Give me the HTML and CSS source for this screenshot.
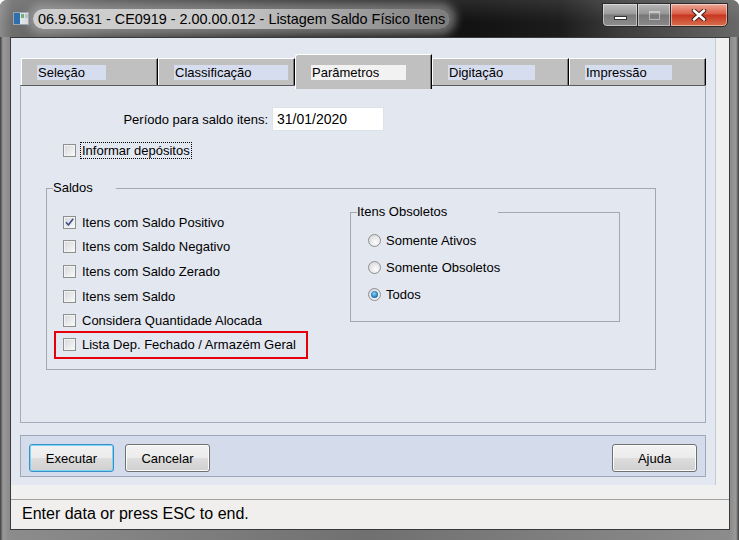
FILE: index.html
```html
<!DOCTYPE html>
<html lang="pt-BR">
<head>
    <meta charset="UTF-8">
    <meta name="viewport" content="width=device-width, initial-scale=1.0">
    <title>Listagem Saldo Físico Itens</title>
    <link rel="stylesheet" href="styles.css">
</head>
<body>
    <div class="window">
        <div class="titlebar">
            <svg class="app-icon" width="16" height="13" viewBox="0 0 16 13">
                <rect x="0.5" y="0.5" width="15" height="12" fill="#e4e9ef" stroke="#9aa6b4"/>
                <rect x="1" y="1" width="6" height="11" fill="#2f6fae"/>
                <rect x="8" y="2" width="3" height="4" fill="#6fae6a"/>
                <rect x="12" y="2" width="3" height="4" fill="#b9c6d3"/>
            </svg>
            <span class="title">06.9.5631 - CE0919 - 2.00.00.012 - Listagem Saldo Físico Itens</span>
            <div class="win-buttons">
                <div class="wb wb-min"><span class="ico-min"></span></div>
                <div class="wb wb-max"><span class="ico-max"></span></div>
                <div class="wb wb-close">
                    <svg width="16" height="12" viewBox="0 0 16 12">
                        <path d="M3 1.5 L13 10.5 M13 1.5 L3 10.5" stroke="#3a1a14" stroke-width="4.4" stroke-linecap="round"/>
                        <path d="M3 1.5 L13 10.5 M13 1.5 L3 10.5" stroke="#fff" stroke-width="2.6" stroke-linecap="round"/>
                    </svg>
                </div>
            </div>
        </div>

        <div class="client">
            <div class="upper">
                <div class="main">
                    <div class="tabs">
                        <div class="tab"><span class="tab-label w-sel">Seleção</span></div>
                        <div class="tab"><span class="tab-label w-cla">Classificação</span></div>
                        <div class="tab tab-active"><span class="tab-label w-par">Parâmetros</span></div>
                        <div class="tab"><span class="tab-label w-dig">Digitação</span></div>
                        <div class="tab"><span class="tab-label w-imp">Impressão</span></div>
                    </div>

                    <div class="panel">
                        <div class="period">
                            <span class="period-label">Período para saldo itens:</span>
                            <div class="field">31/01/2020</div>
                        </div>

                        <div class="opt informar">
                            <span class="box"></span>
                            <span class="focus">Informar depósitos</span>
                        </div>

                        <fieldset class="group saldos">
                            <legend class="lg-saldos">Saldos</legend>
                            <div class="saldos-body">
                                <div class="checks">
                                    <div class="opt">
                                        <span class="box">
                                            <svg width="11" height="11" viewBox="0 0 11 11"><path d="M2 5.2 L4.4 8 L9.2 1.8" fill="none" stroke="#3f528c" stroke-width="1.7"/></svg>
                                        </span>
                                        <span class="txt">Itens com Saldo Positivo</span>
                                    </div>
                                    <div class="opt"><span class="box"></span><span class="txt">Itens com Saldo Negativo</span></div>
                                    <div class="opt"><span class="box"></span><span class="txt">Itens com Saldo Zerado</span></div>
                                    <div class="opt"><span class="box"></span><span class="txt">Itens sem Saldo</span></div>
                                    <div class="opt"><span class="box"></span><span class="txt">Considera Quantidade Alocada</span></div>
                                    <div class="opt marked"><span class="box"></span><span class="txt">Lista Dep. Fechado / Armazém Geral</span></div>
                                </div>

                                <fieldset class="group obsoletos">
                                    <legend class="lg-obs">Itens Obsoletos</legend>
                                    <div class="radios">
                                        <div class="ropt"><span class="radio"></span><span class="txt">Somente Ativos</span></div>
                                        <div class="ropt"><span class="radio"></span><span class="txt">Somente Obsoletos</span></div>
                                        <div class="ropt"><span class="radio radio-on"></span><span class="txt">Todos</span></div>
                                    </div>
                                </fieldset>
                            </div>
                        </fieldset>
                    </div>

                    <div class="actions">
                        <button class="btn btn-focus">Executar</button>
                        <button class="btn">Cancelar</button>
                        <button class="btn btn-help">Ajuda</button>
                    </div>
                </div>
                <div class="strip"></div>
            </div>
            <div class="gap"></div>
            <div class="status">Enter data or press ESC to end.</div>
        </div>
    </div>
</body>
</html>
```

FILE: styles.css
```css
* {
    box-sizing: border-box;
}

body {
    margin: 0;
    background-color: #fff;
    font-family: "Liberation Sans", Arial, sans-serif;
    font-size: 13px;
    color: #000;
}

.window {
    width: 739px;
    height: 540px;
    padding-bottom: 10px;
    display: flex;
    flex-direction: column;
    border-radius: 7px 7px 0 0;
    overflow: hidden;
    background: linear-gradient(to right, #3c3c3c 0, #9a9a9a 3px, #8c8c8c 9px, #707070 50%, #8c8c8c 730px, #9a9a9a 736px, #3c3c3c 739px);
}

/* title bar */
.titlebar {
    height: 37px;
    display: flex;
    align-items: center;
    padding-left: 13px;
    background:
        linear-gradient(to bottom, rgba(255, 255, 255, 0.1), rgba(0, 0, 0, 0) 60%),
        linear-gradient(to right, #8c8c8c 0, #6e6e6e 12px, #4a4a4a 110px, #262626 300px, #121212 470px, #1c1c1c 560px, #3c3c3c 620px, #686868 739px);
}

.app-icon {
    flex: none;
}

.title {
    margin-left: 4px;
    padding: 0 5px;
    height: 20px;
    line-height: 20px;
    font-size: 14.4px;
    color: #000;
    border-radius: 10px;
    background: linear-gradient(to right, #cfcfcf 0, #cacaca 45%, #a2a2a2 75%, #7c7c7c 100%);
    box-shadow: 0 0 9px 6px rgba(180, 180, 180, 0.55);
}

.win-buttons {
    display: flex;
    align-self: flex-start;
    margin: 3px 11px 0 auto;
    height: 24px;
}

.wb {
    height: 24px;
    display: flex;
    align-items: center;
    justify-content: center;
    border: 1px solid #2a2a2a;
    box-shadow: inset 0 0 0 1px rgba(255, 255, 255, 0.45);
}

.wb-min {
    width: 35px;
    border-right: none;
    border-radius: 0 0 0 5px;
    background: linear-gradient(#bdbdbd, #9b9b9b 45%, #7a7a7a 50%, #8e8e8e);
}

.wb-max {
    width: 33px;
    border-right: none;
    background: linear-gradient(#b5b5b5, #969696 45%, #777777 50%, #8a8a8a);
}

.wb-close {
    width: 58px;
    border-radius: 0 0 5px 0;
    background: linear-gradient(#eea898, #da5f48 45%, #c8351f 50%, #d8704f);
}

.ico-min {
    width: 13px;
    height: 4px;
    margin-top: 6px;
    background: #fff;
    border: 1px solid #333;
}

.ico-max {
    width: 11px;
    height: 9px;
    border: 1px solid rgba(255, 255, 255, 0.45);
    border-top-width: 2px;
}

/* client area */
.client {
    flex: 1;
    margin: 0 9px 0 10px;
    display: flex;
    flex-direction: column;
    border: 1px solid #3a3a3a;
    background-color: #f0f0f0;
}

.upper {
    height: 447px;
    display: flex;
}

.main {
    width: 704px;
    padding: 16px 9px 8px 9px;
    display: flex;
    flex-direction: column;
    background-color: #e3e7f0;
}

.strip {
    flex: 1;
    border-left: 1px solid #c5cad4;
    background-color: #f0f0f0;
}

.gap {
    height: 14px;
}

.status {
    flex: 1;
    border-top: 1px solid #a2a2a2;
    background-color: #f0efed;
    padding-left: 11px;
    font-size: 16px;
    line-height: 28px;
}

/* tabs */
.tabs {
    height: 31px;
    display: flex;
    align-items: flex-end;
    padding-left: 1px;
}

.tab {
    width: 137px;
    height: 27px;
    padding: 6px 0 0 15px;
    background-color: #c0c0c0;
    border-top: 1px solid #fff;
    border-left: 1px solid #fff;
    border-right: 1px solid #000;
    box-shadow: inset -1px 0 0 #7a7a7a;
}

.tab-active {
    height: 35px;
    margin-bottom: -4px;
    padding-top: 10px;
    border-radius: 3px 0 0 0;
    position: relative;
    z-index: 1;
}

.tab-label {
    display: block;
    height: 15px;
    line-height: 15px;
    padding-left: 1px;
    background-color: #d6ddee;
}

.tab-active .tab-label {
    background-color: #f2f2f2;
}

.w-sel { width: 69px; }
.w-cla { width: 114px; }
.w-par { width: 95px; }
.w-dig { width: 87px; }
.w-imp { width: 87px; }

/* panel */
.panel {
    flex: 1;
    border: 1px solid #a4abba;
    border-top-color: #5c5c5c;
}

.period {
    display: flex;
    align-items: center;
    margin-top: 21px;
}

.period-label {
    width: 247px;
    margin-right: 4px;
    text-align: right;
}

.field {
    width: 112px;
    height: 24px;
    padding-left: 4px;
    line-height: 22px;
    font-size: 14px;
    background-color: #fff;
    border: 1px solid #dde1e9;
}

.opt {
    height: 24.6px;
    display: flex;
    align-items: center;
    gap: 5px;
}

.informar {
    height: 18px;
    margin: 10px 0 0 42px;
}

.focus,
.txt {
    padding: 0 1px;
    line-height: 15px;
    white-space: nowrap;
}

.focus {
    outline: 1px dotted #000;
}

.box {
    flex: none;
    width: 13px;
    height: 13px;
    display: flex;
    align-items: center;
    justify-content: center;
    border: 1px solid #8e8f8f;
    background: linear-gradient(135deg, #d4d6da, #fbfbfb);
    box-shadow: inset 0 0 0 1px #f3f3f3;
}

/* group boxes */
.group {
    margin: 0;
    padding: 0;
    min-width: 0;
    border: 1px solid #a3a8b1;
}

.group legend {
    margin-left: 6px;
    padding: 0;
    line-height: 16px;
}

.lg-saldos { width: 63px; }
.lg-obs { width: 141px; }

.saldos {
    width: 610px;
    margin: 21px 0 0 25px;
}

.saldos-body {
    display: flex;
    align-items: flex-start;
    padding: 8px 0 12px 16px;
}

.checks {
    width: 287px;
    margin-top: 6px;
}

.marked {
    width: 250px;
    height: 24px;
    margin-left: -7px;
    padding-left: 7px;
    outline: 2px solid #e6000c;
}

.obsoletos {
    width: 270px;
}

.radios {
    padding: 6.5px 0 13px 17px;
}

.ropt {
    height: 27px;
    display: flex;
    align-items: center;
    gap: 4px;
}

.radio {
    flex: none;
    width: 13px;
    height: 13px;
    display: flex;
    align-items: center;
    justify-content: center;
    border-radius: 50%;
    border: 1px solid #8e8f8f;
    background: radial-gradient(circle at 60% 65%, #fdfdfd, #d0d1d3);
}

.radio-on::after {
    content: "";
    width: 7px;
    height: 7px;
    border-radius: 50%;
    background: radial-gradient(circle at 45% 40%, #94d8f8, #2a80c2 55%, #0d3e6d);
}

/* buttons */
.actions {
    height: 42px;
    margin-top: 12px;
    padding: 8px 8px 0 8px;
    display: flex;
    align-items: flex-start;
    gap: 11px;
    border: 1px solid #9fa7b8;
    background-color: #d4dcec;
}

.btn {
    width: 85px;
    height: 28px;
    padding: 0;
    font-family: "Liberation Sans", Arial, sans-serif;
    font-size: 13px;
    color: #000;
    border: 1px solid #707070;
    border-radius: 3px;
    background: linear-gradient(#f3f3f3 0, #ebebeb 48%, #dddddd 52%, #cfcfcf 100%);
    box-shadow: inset 0 0 0 1px #fbfbfb;
}

.btn-focus {
    border-color: #3a8fc4;
    box-shadow: inset 0 0 0 1px #7fd3f6;
}

.btn-help {
    margin-left: auto;
}
```
